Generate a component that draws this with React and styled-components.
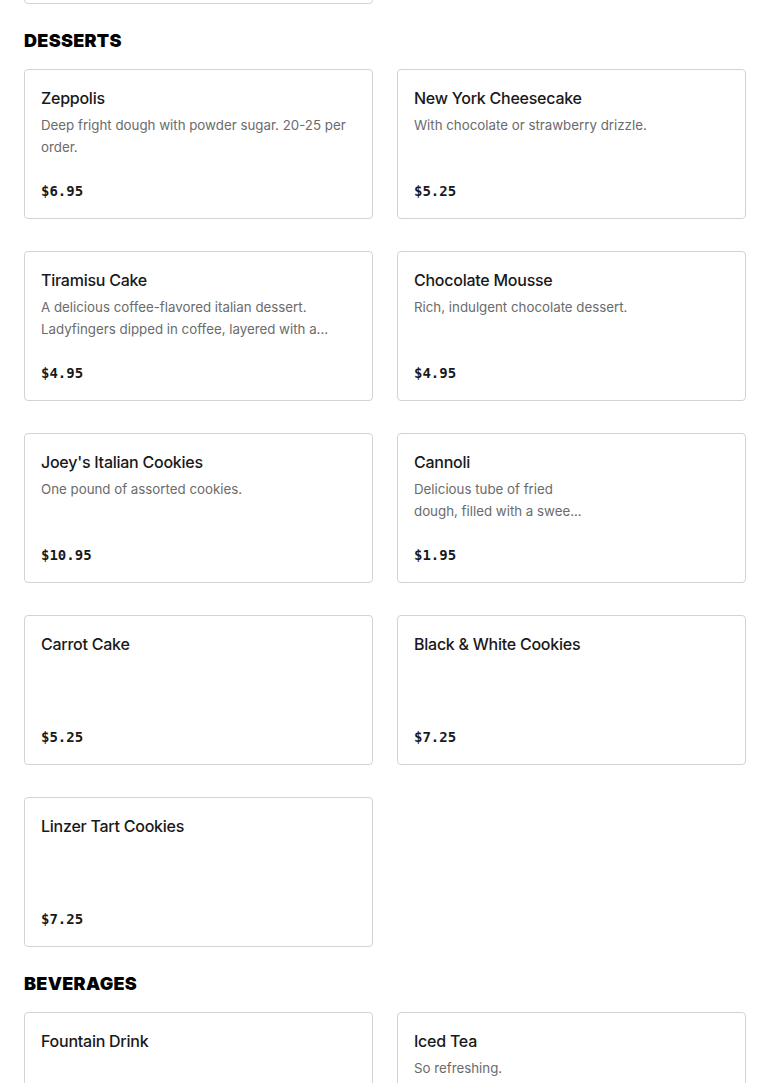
import React from 'react';
import styled, { createGlobalStyle } from 'styled-components';

const GlobalStyle = createGlobalStyle`
  html, body {
    margin: 0;
    padding: 0;
    background: #fff;
  }
  body {
    font-family: Inter, "Noto Sans", sans-serif;
    color: #191919;
    height: 1083px;
    overflow: hidden;
  }
`;

const Page = styled.div`
  padding: 0 24px;
  margin-top: -146px;
`;

const Section = styled.section`
  margin-bottom: 24px;
`;

const SectionTitle = styled.h2`
  margin: 0 0 16px;
  font-size: 18px;
  line-height: 25px;
  font-weight: 900;
  letter-spacing: 0.3px;
  color: #000;
  text-transform: uppercase;
`;

const Grid = styled.div`
  display: grid;
  grid-template-columns: 1fr 1fr;
  column-gap: 24px;
  row-gap: 32px;
`;

const Card = styled.div`
  height: 150px;
  box-sizing: border-box;
  border: 1px solid #d3d3d3;
  border-radius: 4px;
  padding: 16px 16px 17px;
  display: flex;
  flex-direction: column;
`;

const Name = styled.h3`
  margin: 0;
  font-size: 16px;
  line-height: 24px;
  font-weight: 500;
  letter-spacing: -0.25px;
  color: #191919;
`;

const Desc = styled.p`
  margin: 4px 0 0;
  font-size: 13.3px;
  line-height: 22px;
  color: #6b6b6b;
  white-space: pre-line;
  display: -webkit-box;
  -webkit-line-clamp: 2;
  -webkit-box-orient: vertical;
  overflow: hidden;
`;

const Price = styled.span`
  margin-top: auto;
  font-family: "DejaVu Sans Mono", "Liberation Mono", monospace;
  font-size: 14px;
  line-height: 20px;
  font-weight: 700;
  color: #191919;
`;

const menu = [
  {
    title: 'Sides',
    items: [{ name: 'Garlic Knots', desc: 'Six pieces.', price: '$3.95' }],
    hideTitle: true,
  },
  {
    title: 'Desserts',
    items: [
      { name: 'Zeppolis', desc: 'Deep fright dough with powder sugar. 20-25 per order.', price: '$6.95' },
      { name: 'New York Cheesecake', desc: 'With chocolate or strawberry drizzle.', price: '$5.25' },
      { name: 'Tiramisu Cake', desc: 'A delicious coffee-flavored italian dessert. Ladyfingers dipped in coffee, layered with a...', price: '$4.95' },
      { name: 'Chocolate Mousse', desc: 'Rich, indulgent chocolate dessert.', price: '$4.95' },
      { name: "Joey's Italian Cookies", desc: 'One pound of assorted cookies.', price: '$10.95' },
      { name: 'Cannoli', desc: 'Delicious tube of fried\ndough, filled with a swee...', price: '$1.95' },
      { name: 'Carrot Cake', price: '$5.25' },
      { name: 'Black & White Cookies', price: '$7.25' },
      { name: 'Linzer Tart Cookies', price: '$7.25' },
    ],
  },
  {
    title: 'Beverages',
    items: [
      { name: 'Fountain Drink', price: '$2.50' },
      { name: 'Iced Tea', desc: 'So refreshing.', price: '$2.95' },
    ],
  },
];

const MenuCard = ({ item }) => (
  <Card>
    <Name>{item.name}</Name>
    {item.desc ? <Desc>{item.desc}</Desc> : null}
    <Price>{item.price}</Price>
  </Card>
);

const App = () => (
  <>
    <GlobalStyle />
    <Page>
      {menu.map((section) => (
        <Section key={section.title}>
          {section.hideTitle ? null : <SectionTitle>{section.title}</SectionTitle>}
          <Grid>
            {section.items.map((item) => (
              <MenuCard key={item.name} item={item} />
            ))}
          </Grid>
        </Section>
      ))}
    </Page>
  </>
);

export default App;
